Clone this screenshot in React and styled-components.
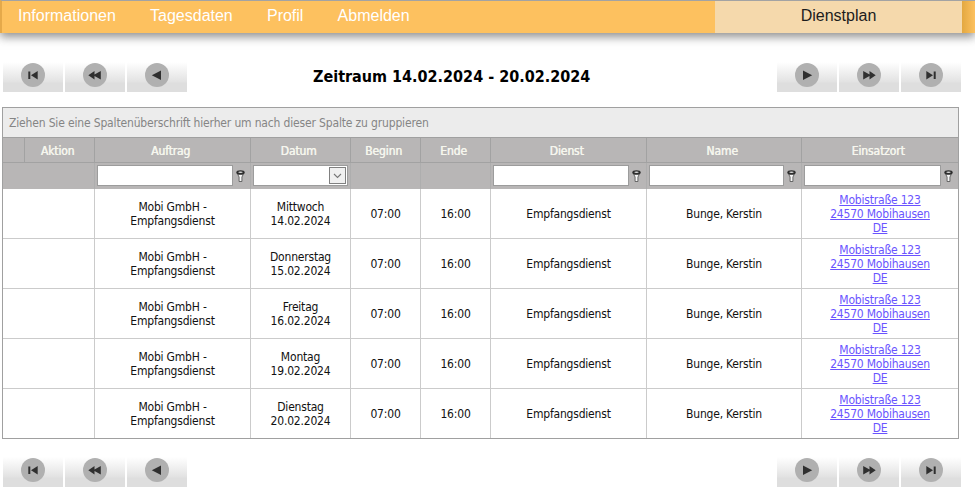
import React from 'react';
import styled, { createGlobalStyle } from 'styled-components';

const Global = createGlobalStyle`
  html, body { margin: 0; padding: 0; background: #fff; }
  body { width: 975px; height: 499px; overflow: hidden; font-family: "DejaVu Sans Condensed", "DejaVu Sans", sans-serif; }
`;

const Bar = styled.header`
  display: flex;
  height: 32px;
  border-top: 1px solid #a3a3a3;
  border-left: 2px solid #e5a94a;
  background: #fdc15f;
  box-shadow: 0 4px 9px rgba(70, 70, 70, 0.6);
  font: 16px "Liberation Sans", Arial, sans-serif;
`;
const Menu = styled.nav`
  display: flex;
  flex: 1;
  padding-left: 16px;
  gap: 34.2px;
  align-items: center;
`;
const MenuItem = styled.a`
  color: #fff;
  position: relative;
  top: -1px;
`;
const ActiveTab = styled.div`
  width: 247px;
  display: flex;
  align-items: center;
  justify-content: center;
  background: #f5d9ac;
  color: #1c1c1c;
  padding-bottom: 2px;
  box-sizing: border-box;
`;
const BarEnd = styled.div`
  width: 13px;
  background: linear-gradient(90deg, #e3a841, #fdc15f);
`;

const Toolbar = styled.div`
  display: flex;
  align-items: center;
  height: 30px;
  margin: ${p => p.$top}px 0 0 3px;
  width: 958px;
`;
const NavGroup = styled.div`
  display: flex;
  gap: 2px;
`;
const NavButton = styled.button`
  width: 60px;
  height: 30px;
  padding: 0 0 4px;
  border: 0;
  display: flex;
  align-items: center;
  justify-content: center;
  background: linear-gradient(180deg, #fff 0, #e2e2e2 20px, #dedede 21px, #dedede 100%);
`;
const Title = styled.h1`
  flex: 1;
  margin: 0 0 2px 126px;
  font: bold 16px "DejaVu Sans Condensed", "DejaVu Sans", Verdana, sans-serif;
  color: #000;
  white-space: nowrap;
`;

const Grid = styled.table`
  margin: 15px 0 18px 2px;
  width: 957px;
  box-sizing: border-box;
  table-layout: fixed;
  border-collapse: separate;
  border-spacing: 0;
  border: 1px solid #a0a0a0;
  font-size: 12px;
  letter-spacing: -0.2px;
  color: #111;
`;
const GroupCell = styled.td`
  height: 29px;
  padding: 0 0 0 6px;
  background: #ececec;
  color: #858585;
  border-bottom: 1px solid #a0a0a0;
  font-size: 12px;
  letter-spacing: -0.16px;
`;
const HeadCell = styled.th`
  height: 25px;
  padding: 1px 4px 0 0;
  box-sizing: border-box;
  background: #b8b6b6;
  color: #f6f6ee;
  font-weight: normal;
  letter-spacing: -0.1px;
  text-shadow: 0.5px 0 0 #f6f6ee;
  text-align: center;
  border-right: ${p => (p.$last ? '0' : '1px solid #a2a2a2')};
  border-bottom: 1px solid #a2a2a2;
`;
const FilterCell = styled.td`
  height: 26px;
  padding: 0 0 1px 2px;
  box-sizing: border-box;
  background: #b8b6b6;
  border-right: ${p => (p.$last ? '0' : '1px solid #aeaeae')};
`;
const FilterBox = styled.div`
  display: flex;
  align-items: center;
`;
const FilterInput = styled.div`
  box-sizing: border-box;
  width: ${p => p.$w}px;
  height: 21px;
  background: #fff;
  border: 1px solid #9c9c9c;
  display: flex;
  align-items: center;
  justify-content: flex-end;
  padding-right: 1px;
`;
const FunnelIcon = styled.svg`
  width: 9px;
  height: 12px;
  margin-left: 3px;
  flex: none;
`;
const DropButton = styled.span`
  box-sizing: border-box;
  width: 17px;
  height: 17px;
  border: 1px solid #808080;
  background: #f0f0f0;
  display: flex;
  align-items: center;
  justify-content: center;
`;
const Cell = styled.td`
  height: 49px;
  padding: 0;
  text-align: center;
  line-height: 14px;
  background: #fff;
  border-right: ${p => (p.$last ? '0' : '1px solid #cbcbcb')};
  border-bottom: ${p => (p.$end ? '0' : '1px solid #cbcbcb')};
`;
const Place = styled.a`
  color: #6a54ff;
  text-decoration: underline;
`;

const glyphs = {
  first: <><rect x="7.3" y="8.5" width="2" height="7.5" /><path d="M16.7 8 10 12.2l6.7 4.3z" /></>,
  rewind: <path d="M11.5 8 5.3 12.2l6.2 4.3v-3.6l6.3 3.6V8l-6.3 3.6z" />,
  back: <path d="M16 7.5 6.8 12.3l9.2 4.7z" />,
  play: <path d="M8 7.5l9.2 4.8L8 17z" />,
  forward: <path d="M12.5 8l6.2 4.2-6.2 4.3v-3.6l-6.3 3.6V8l6.3 3.6z" />,
  last: <><rect x="14.7" y="8.5" width="2" height="7.5" /><path d="M7.3 8l6.7 4.2-6.7 4.3z" /></>,
};

const NavIcon = ({ kind }) => (
  <svg width="24" height="24" viewBox="0 0 24 24">
    <circle cx="12" cy="12" r="12" fill="#b0b0b0" />
    <g fill="#2f2f2f">{glyphs[kind]}</g>
  </svg>
);

const Funnel = () => (
  <FunnelIcon viewBox="0 0 9 12">
    <ellipse cx="4.5" cy="2.500" rx="4.200" ry="2.200" fill="#2e2e2e" />
    <ellipse cx="4.5" cy="2.300" rx="2.200" ry="0.800" fill="#d8d8d8" />
    <path d="M1.800 4.500h5.400L5.900 7v4.500H3.100V7z" fill="#f6f6f6" stroke="#3a3a3a" strokeWidth="0.700" />
  </FunnelIcon>
);

const Chevron = () => (
  <svg width="9" height="6" viewBox="0 0 9 6">
    <path d="M1 1l3.500 3.500L8 1" fill="none" stroke="#777" strokeWidth="1.100" />
  </svg>
);

const Nav = ({ top, title }) => (
  <Toolbar $top={top}>
    <NavGroup>
      {['first', 'rewind', 'back'].map(k => <NavButton key={k}><NavIcon kind={k} /></NavButton>)}
    </NavGroup>
    <Title>{title}</Title>
    <NavGroup>
      {['play', 'forward', 'last'].map(k => <NavButton key={k}><NavIcon kind={k} /></NavButton>)}
    </NavGroup>
  </Toolbar>
);

const widths = [22, 70, 156, 100, 70, 70, 156, 155, 156];
const rows = [
  ['Mittwoch', '14.02.2024'],
  ['Donnerstag', '15.02.2024'],
  ['Freitag', '16.02.2024'],
  ['Montag', '19.02.2024'],
  ['Dienstag', '20.02.2024'],
];

const TextFilter = ({ w, last }) => (
  <FilterCell $last={last}>
    <FilterBox>
      <FilterInput $w={w} />
      <Funnel />
    </FilterBox>
  </FilterCell>
);

export default function App() {
  return (
    <>
      <Global />
      <Bar>
        <Menu>
          <MenuItem>Informationen</MenuItem>
          <MenuItem>Tagesdaten</MenuItem>
          <MenuItem>Profil</MenuItem>
          <MenuItem>Abmelden</MenuItem>
        </Menu>
        <ActiveTab>Dienstplan</ActiveTab>
        <BarEnd />
      </Bar>
      <Nav top={29} title="Zeitraum 14.02.2024 - 20.02.2024" />
      <Grid>
        <colgroup>
          {widths.map((w, i) => <col key={i} width={w} />)}
        </colgroup>
        <thead>
          <tr><GroupCell colSpan={9}>Ziehen Sie eine Spaltenüberschrift hierher um nach dieser Spalte zu gruppieren</GroupCell></tr>
          <tr>
            <HeadCell />
            <HeadCell>Aktion</HeadCell>
            <HeadCell>Auftrag</HeadCell>
            <HeadCell>Datum</HeadCell>
            <HeadCell>Beginn</HeadCell>
            <HeadCell>Ende</HeadCell>
            <HeadCell>Dienst</HeadCell>
            <HeadCell>Name</HeadCell>
            <HeadCell $last>Einsatzort</HeadCell>
          </tr>
          <tr>
            <FilterCell colSpan={2} />
            <TextFilter w={136} />
            <FilterCell>
              <FilterInput $w={95}>
                <DropButton><Chevron /></DropButton>
              </FilterInput>
            </FilterCell>
            <FilterCell />
            <FilterCell />
            <TextFilter w={136} />
            <TextFilter w={135} />
            <TextFilter w={137} last />
          </tr>
        </thead>
        <tbody>
          {rows.map(([day, date], i) => {
            const end = i === rows.length - 1;
            return (
              <tr key={date}>
                <Cell colSpan={2} $end={end} />
                <Cell $end={end}>Mobi GmbH -<br />Empfangsdienst</Cell>
                <Cell $end={end}>{day}<br />{date}</Cell>
                <Cell $end={end}>07:00</Cell>
                <Cell $end={end}>16:00</Cell>
                <Cell $end={end}>Empfangsdienst</Cell>
                <Cell $end={end}>Bunge, Kerstin</Cell>
                <Cell $end={end} $last>
                  <Place>Mobistraße 123<br />24570 Mobihausen<br />DE</Place>
                </Cell>
              </tr>
            );
          })}
        </tbody>
      </Grid>
      <Nav top={18} />
    </>
  );
}
